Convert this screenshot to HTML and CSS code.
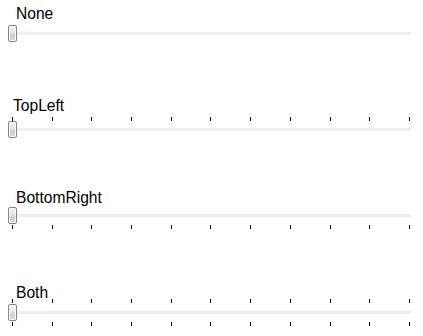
FILE: index.html
```html
<!DOCTYPE html>
<html>
<head>
<meta charset="utf-8">
<link rel="stylesheet" href="styles.css">
</head>
<body>
<div class="slider s1">
  <div class="label l-none">None</div>
  <div class="row"><div class="track"></div><div class="thumb"></div></div>
</div>
<div class="slider s2">
  <div class="label l-top">TopLeft</div>
  <div class="ticks top"><i></i><i></i><i></i><i></i><i></i><i></i><i></i><i></i><i></i><i></i><i></i></div>
  <div class="row"><div class="track"></div><div class="thumb"></div></div>
</div>
<div class="slider s3">
  <div class="label l-br">BottomRight</div>
  <div class="row"><div class="track"></div><div class="thumb"></div></div>
  <div class="ticks bottom"><i></i><i></i><i></i><i></i><i></i><i></i><i></i><i></i><i></i><i></i><i></i></div>
</div>
<div class="slider s4">
  <div class="label l-both">Both</div>
  <div class="ticks top overlap"><i></i><i></i><i></i><i></i><i></i><i></i><i></i><i></i><i></i><i></i><i></i></div>
  <div class="row"><div class="track"></div><div class="thumb"></div></div>
  <div class="ticks bottom"><i></i><i></i><i></i><i></i><i></i><i></i><i></i><i></i><i></i><i></i><i></i></div>
</div>
</body>
</html>
```
FILE: styles.css
```css
html, body {
  margin: 0;
  padding: 0;
  background: #ffffff;
}
body {
  font-family: "Liberation Sans", Arial, sans-serif;
  font-size: 15.6px;
  color: #000000;
  width: 423px;
  height: 336px;
  overflow: hidden;
}
.slider {
  width: 423px;
}
.s1 { padding-top: 5px; }
.s2 { margin-top: 55px; }
.s3 { margin-top: 51px; }
.s4 { margin-top: 55px; }
.label {
  height: 17px;
  line-height: 17px;
  white-space: nowrap;
}
.l-none { padding-left: 16px; }
.l-top { padding-left: 13px; }
.l-br { padding-left: 16px; }
.l-both { padding-left: 16px; }
.s1 .row { margin-top: 3px; }
.s2 .ticks.top { margin-top: 3px; }
.s3 .row { margin-top: 1px; }
.s3 .ticks.bottom { margin-top: 1px; }
.s4 .ticks.top { margin-top: -2px; }
.s4 .row { margin-top: 1px; }
.s4 .ticks.bottom { margin-top: 1px; }
.ticks {
  display: flex;
  justify-content: space-between;
  margin-left: 12px;
  width: 398px;
  height: 4px;
}
.ticks i {
  display: block;
  width: 1px;
  height: 4px;
  background: #000000;
}
.row {
  position: relative;
  height: 17px;
  margin-left: 8px;
  width: 403px;
  display: flex;
  align-items: center;
}
.track {
  width: 403px;
  height: 3px;
  background: #eeeeee;
}
.thumb {
  position: absolute;
  left: 0;
  top: 0;
  width: 7px;
  height: 15px;
  border: 1px solid #858585;
  border-radius: 2px;
  box-shadow: inset 0 0 0 1px #fbfbfb;
  background: linear-gradient(#f2f2f2 0%, #e4e4e4 45%, #cfcfcf 60%, #d8d8d8 100%);
}
```
